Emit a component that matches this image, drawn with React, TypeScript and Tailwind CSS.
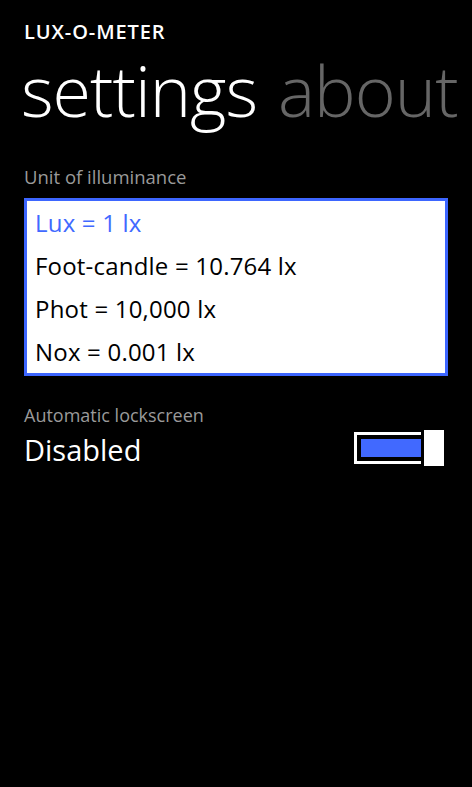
const font = { fontFamily: '"Segoe UI", "Open Sans", "Noto Sans", sans-serif' };

const units = [
  { label: "Lux = 1 lx", selected: true },
  { label: "Foot-candle = 10.764 lx" },
  { label: "Phot = 10,000 lx" },
  { label: "Nox = 0.001 lx" },
];

function Toggle() {
  return (
    <div className="flex items-center">
      <div className="flex h-[32px] w-[67px] items-center border-[3px] border-r-0 border-white py-[4px] pl-[4px]">
        <div className="h-full flex-1 bg-[#4169ff]" />
      </div>
      <div className="ml-[3px] h-[36px] w-[20px] bg-white" />
    </div>
  );
}

export default function App() {
  return (
    <div className="min-h-[787px] w-[472px] overflow-hidden bg-black text-white" style={font}>
      <div className="px-[24px] pt-[19px]">
        <div className="text-[20px] font-semibold leading-[26px] tracking-[0.9px]">LUX-O-METER</div>
        <div className="-ml-[3px] mt-[9px] flex gap-[21px] whitespace-nowrap text-[70px] font-light leading-[72px] tracking-[-1px]">
          <span>settings</span>
          <span className="text-[#666666]">about</span>
        </div>

        <div className="mt-[39px] text-[18.5px] leading-[24px] text-[#9a9a9a]">Unit of illuminance</div>
        <div className="mt-[9px] w-[424px] border-[3px] border-[#3d66ff] bg-white pl-[8px]">
          {units.map((u) => (
            <div
              key={u.label}
              className={`h-[43px] text-[24px] leading-[43px] tracking-[0.2px] ${u.selected ? "text-[#4169ff]" : "text-black"}`}
            >
              {u.label}
            </div>
          ))}
        </div>

        <div className="mt-[27px] text-[18px] leading-[24px] text-[#9a9a9a]">Automatic lockscreen</div>
        <div className="flex items-center justify-between pr-[4px]">
          <span className="translate-y-[2px] text-[29px] leading-[42px]">Disabled</span>
          <Toggle />
        </div>
      </div>
    </div>
  );
}
